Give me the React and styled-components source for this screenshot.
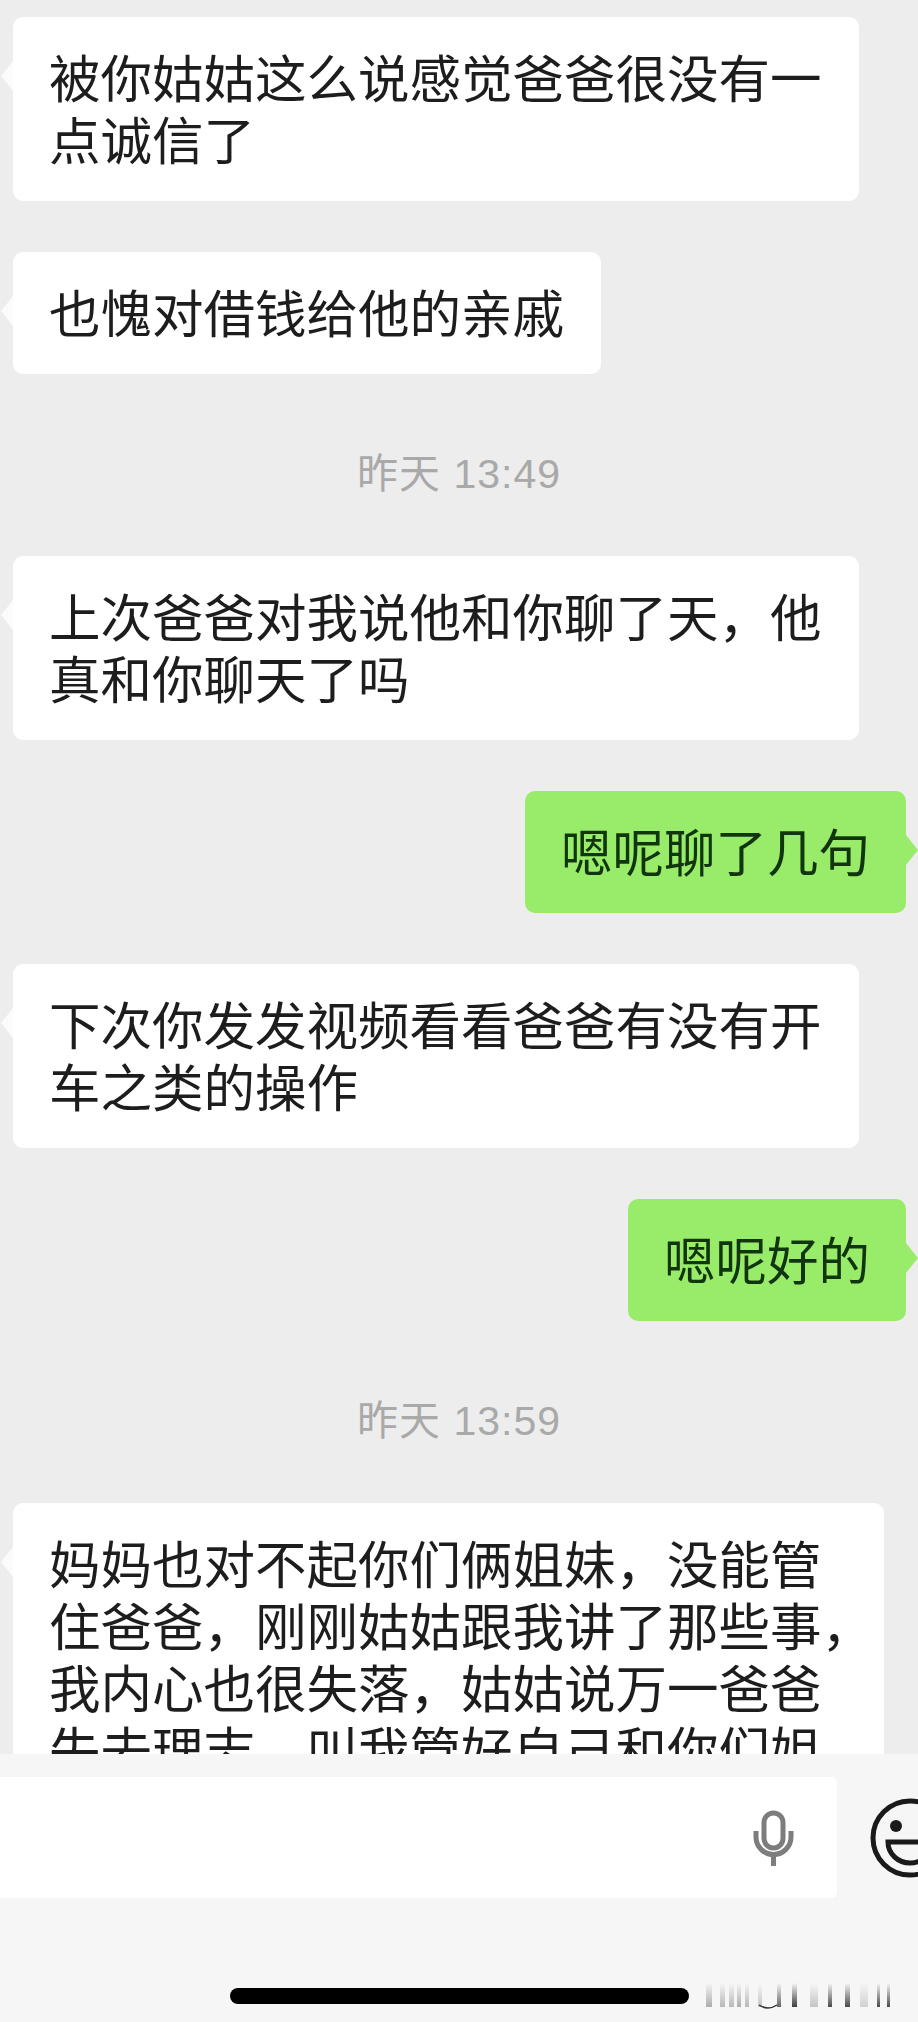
import React from 'react';
import styled, { createGlobalStyle } from 'styled-components';

const GlobalStyle = createGlobalStyle`
	html, body {
		margin: 0;
		padding: 0;
		background: #ededed;
	}
`;

const Screen = styled.div`
	width: 918px;
	height: 2022px;
	display: flex;
	flex-direction: column;
	overflow: hidden;
	background: #ededed;
	font-family: "Noto Sans CJK SC", "Liberation Sans", sans-serif;
`;

const MessageList = styled.div`
	height: 1754px;
	flex: none;
	overflow: hidden;
	padding-top: 17px;
	box-sizing: border-box;
	display: flex;
	flex-direction: column;
	gap: 51px;
`;

const Row = styled.div`
	display: flex;
	flex: none;
	justify-content: ${({ $mine }) => ($mine ? 'flex-end' : 'flex-start')};
	padding: ${({ $mine }) => ($mine ? '0 12px 0 0' : '0 0 0 13px')};
`;

const Bubble = styled.div`
	position: relative;
	box-sizing: border-box;
	width: ${({ $width }) => ($width ? `${$width}px` : 'auto')};
	padding: ${({ $mine }) => ($mine ? '28px 36px 32px' : '28px 37px 32px 36px')};
	border-radius: 10px;
	background: ${({ $mine }) => ($mine ? '#98ec69' : '#ffffff')};
	color: ${({ $mine }) => ($mine ? '#10350f' : '#1d1d1d')};
	font-size: 51.5px;
	line-height: 62px;
	white-space: nowrap;

	&::before {
		content: '';
		position: absolute;
		top: 44px;
		${({ $mine }) => ($mine ? 'right: -12px;' : 'left: -12px;')}
		width: 12px;
		height: 30px;
		background: ${({ $mine }) => ($mine ? '#98ec69' : '#fbfbfb')};
		clip-path: ${({ $mine }) =>
			$mine
				? 'polygon(0 0, 100% 50%, 0 100%)'
				: 'polygon(100% 0, 0 50%, 100% 100%)'};
	}
`;

const Line = styled.div``;

const TimeLabel = styled.div`
	flex: none;
	margin: 29px 0 11px;
	text-align: center;
	font-family: "Liberation Sans", "Noto Sans CJK SC", sans-serif;
	font-size: 41px;
	line-height: 40px;
	letter-spacing: 1px;
	color: #a9a9a9;
`;

const BottomPanel = styled.div`
	flex: 1;
	min-height: 0;
	background: #f6f6f6;
	overflow: hidden;
`;

const InputRow = styled.div`
	display: flex;
	align-items: center;
	margin-top: 23px;
`;

const InputBox = styled.div`
	width: 837px;
	height: 121px;
	flex: none;
	box-sizing: border-box;
	padding-right: 43px;
	display: flex;
	align-items: center;
	justify-content: flex-end;
	background: #ffffff;
	border-radius: 0 6px 6px 0;
`;

const EmojiIcon = styled.svg`
	flex: none;
	margin-left: 33px;
`;

const HomeRow = styled.div`
	display: flex;
	align-items: center;
	margin-top: 85px;
	padding-left: 230px;
`;

const HomeBar = styled.div`
	width: 459px;
	height: 16px;
	flex: none;
	border-radius: 8px;
	background: #000000;
`;

const Smudge = styled.svg`
	flex: none;
	margin-left: 17px;
`;

const messages = [
	{ lines: ['被你姑姑这么说感觉爸爸很没有一', '点诚信了'] },
	{ lines: ['也愧对借钱给他的亲戚'] },
	{ time: '昨天 13:49' },
	{ lines: ['上次爸爸对我说他和你聊了天，他', '真和你聊天了吗'] },
	{ mine: true, lines: ['嗯呢聊了几句'] },
	{ lines: ['下次你发发视频看看爸爸有没有开', '车之类的操作'] },
	{ mine: true, lines: ['嗯呢好的'] },
	{ time: '昨天 13:59' },
	{
		width: 871,
		lines: [
			'妈妈也对不起你们俩姐妹，没能管',
			'住爸爸，刚刚姑姑跟我讲了那些事，',
			'我内心也很失落，姑姑说万一爸爸',
			'失去理志，叫我管好自己和你们姐',
		],
	},
];

// leftover streaks next to the home bar: x, width, darkness
const streaks = [
	[0, 6, 0.3], [14, 5, 0.25], [23, 5, 0.25], [31, 4, 0.3], [39, 4, 0.25],
	[52, 4, 0.2], [71, 4, 0.6], [86, 5, 0.75], [104, 8, 0.2], [122, 4, 0.7],
	[139, 5, 0.7], [154, 8, 0.15], [171, 3, 0.7], [181, 3, 0.7],
];

function MicIcon() {
	return (
		<svg width="41" height="56" viewBox="0 0 41 56" fill="none" stroke="#7d7d7d" strokeWidth="5">
			<rect x="11" y="3" width="19" height="35" rx="9.5" />
			<path d="M3 21v6a17.5 17.5 0 0 0 35 0v-6" />
			<path d="M20.5 45v11" />
		</svg>
	);
}

function Emoji() {
	return (
		<EmojiIcon width="80" height="80" viewBox="0 0 80 80" fill="none" stroke="#1a1a1a" strokeWidth="5">
			<circle cx="40" cy="40" r="37" />
			<circle cx="26" cy="28" r="6" fill="#1a1a1a" stroke="none" />
			<circle cx="54" cy="28" r="6" fill="#1a1a1a" stroke="none" />
			<path d="M18 44h44a22 21 0 0 1-44 0z" />
		</EmojiIcon>
	);
}

export default function App() {
	return (
		<Screen>
			<GlobalStyle />
			<MessageList>
				{messages.map((m, i) =>
					m.time ? (
						<TimeLabel key={i}>{m.time}</TimeLabel>
					) : (
						<Row key={i} $mine={m.mine}>
							<Bubble $mine={m.mine} $width={m.width}>
								{m.lines.map((line, j) => (
									<Line key={j}>{line}</Line>
								))}
							</Bubble>
						</Row>
					)
				)}
			</MessageList>
			<BottomPanel>
				<InputRow>
					<InputBox>
						<MicIcon />
					</InputBox>
					<Emoji />
				</InputRow>
				<HomeRow>
					<HomeBar />
					<Smudge width="186" height="26" viewBox="0 0 186 26">
						<defs>
							<linearGradient id="fade" x1="0" y1="0" x2="0" y2="1">
								<stop offset="0" stopColor="#000" stopOpacity="0" />
								<stop offset="1" stopColor="#000" stopOpacity="1" />
							</linearGradient>
						</defs>
						{streaks.map(([x, w, o]) => (
							<rect key={x} x={x} y="0" width={w} height="24" fill="url(#fade)" opacity={o} />
						))}
						<path d="M53 22q9 6 18 0" fill="none" stroke="#333" strokeWidth="1.5" />
					</Smudge>
				</HomeRow>
			</BottomPanel>
		</Screen>
	);
}
